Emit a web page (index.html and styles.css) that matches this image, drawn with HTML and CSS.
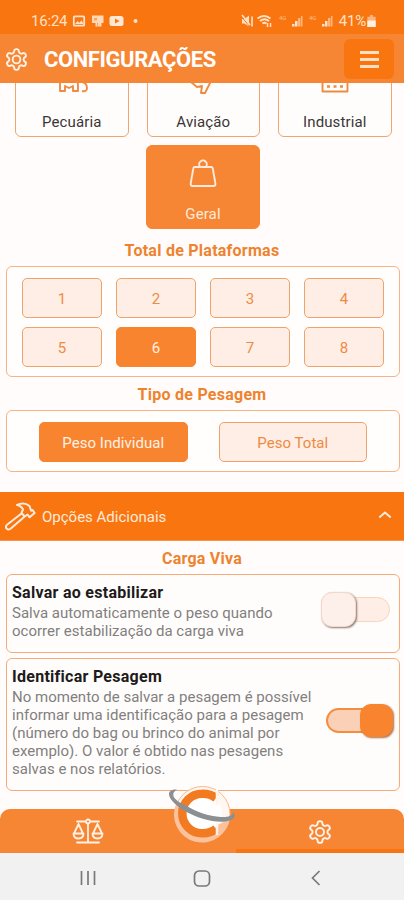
FILE: index.html
```html
<!DOCTYPE html>
<html lang="pt-BR">
<head>
<meta charset="utf-8">
<title>Configurações</title>
<link rel="stylesheet" href="styles.css">
</head>
<body>
<svg class="defs" width="0" height="0">
  <symbol id="gear" viewBox="0 0 24 24">
    <path d="M12.220 2h-.44a2 2 0 0 0-2 2v.18a2 2 0 0 1-1 1.730l-.43.25a2 2 0 0 1-2 0l-.15-.08a2 2 0 0 0-2.730.73l-.22.38a2 2 0 0 0 .73 2.730l.15.1a2 2 0 0 1 1 1.720v.51a2 2 0 0 1-1 1.740l-.15.09a2 2 0 0 0-.73 2.730l.22.38a2 2 0 0 0 2.730.73l.15-.08a2 2 0 0 1 2 0l.43.25a2 2 0 0 1 1 1.730V20a2 2 0 0 0 2 2h.44a2 2 0 0 0 2-2v-.18a2 2 0 0 1 1-1.730l.43-.25a2 2 0 0 1 2 0l.15.08a2 2 0 0 0 2.730-.73l.22-.39a2 2 0 0 0-.73-2.730l-.15-.08a2 2 0 0 1-1-1.740v-.5a2 2 0 0 1 1-1.740l.15-.09a2 2 0 0 0 .73-2.730l-.22-.38a2 2 0 0 0-2.730-.73l-.15.08a2 2 0 0 1-2 0l-.43-.25a2 2 0 0 1-1-1.730V4a2 2 0 0 0-2-2z"/>
    <circle cx="12" cy="12" r="3.700"/>
  </symbol>
</svg>
<div class="phone">
  <div class="status">
    <span class="clock">16:24</span>
    <svg class="status-left" width="68" height="14" viewBox="0 0 68 14">
      <rect x="1.8" y="2.3" width="10.4" height="9.4" rx="1" fill="none" stroke="#ffe1c7" stroke-width="1.8"/>
      <path d="M3 10l2.500-3 2 1.800 2-2.600 2 3.800z" fill="#ffe1c7"/>
      <path d="M20 1.500h11.500v7.500h-2v3.500h-6V9H20z" fill="#ffd9b8"/><path d="M22 4h3v2.500h-3z" fill="#fba45f"/><path d="M25.500 8.500V12" stroke="#fba45f"/>
      <rect x="37.500" y="2" width="14" height="10" rx="2.500" fill="#ffe8d4"/><path d="M43 4.500v5l4.500-2.500z" fill="#f97510"/>
      <circle cx="63.500" cy="7" r="2" fill="#ffe1c7"/>
    </svg>
    <svg class="status-right" width="97" height="14" viewBox="0 0 97 14" fill="#ffe1c7">
      <path d="M1 5h2.500L8 1.500v11L3.500 9.500H1z"/><path d="M0 2l9 11" stroke="#f97510"/><path d="M1 1l8 10M11 2.500v10" stroke="#ffe1c7" stroke-width="1.600"/>
      <path d="M16.500 4.500q6.500-5 13 0M19 7q4.500-3.500 9 0M21.500 9.500q2-1.500 4 0" fill="none" stroke="#ffe1c7" stroke-width="1.900"/><path d="M26.500 9v4M29.500 9v4" stroke="#ffe1c7" stroke-width="1.500"/>
      <text x="38" y="6" class="net">4G</text>
      <path d="M51 12.500V10h2.500v2.500zM54 12.500V7h2.500v5.500z"/><path d="M57 12.500V4h2.500v8.500zM60 12.500V2h1.500v10.500z" opacity=".6"/>
      <text x="68" y="6" class="net">4G</text>
      <path d="M81 12.500V10h2.500v2.500zM84 12.500V7h2.500v5.500z"/><path d="M87 12.500V4h2.500v8.500zM90 12.500V2h1.500v10.500z" opacity=".6"/>
    </svg>
    <span class="percent">41%</span>
    <svg class="battery" width="9" height="12" viewBox="0 0 9 13"><path d="M3 0h3v2H9v11H0V2h3z" fill="#fbb47d"/><path d="M0 6h9v7H0z" fill="#fff0e2"/></svg>
  </div>

  <header class="header">
    <svg class="header-gear line" width="25" height="25"><use href="#gear"/></svg>
    <h1>CONFIGURAÇÕES</h1>
    <button class="menu" aria-label="Menu"><i></i><i></i><i></i></button>
  </header>

  <main class="content">
    <div class="cards">
      <div class="card">
        <svg width="36" height="36" viewBox="0 0 36 36"><path d="M6 12q-2-6 4-7h14q5-1 7 3l2 4M6 12v15h5v-5l4 2 4-2v5h5v-6q-1-4 4-3 5 1 5 6 0 4-5 3"/></svg>
        <span>Pecuária</span>
      </div>
      <div class="card">
        <svg width="36" height="36" viewBox="0 0 36 36"><path d="M5 9l6 4 7-1L8 3l4-1 13 7 5-2q4 0 2 3l-7 9-5 10h-4l1-7-5 1-6-5 9 0z"/></svg>
        <span>Aviação</span>
      </div>
      <div class="card">
        <svg width="36" height="36" viewBox="0 0 36 36"><path d="M5.500 27.500V12l8 5v-5l8 5V4h9v23.500z"/><path d="M10 22.500h3M16.500 22.500h3M23 22.500h3" stroke-width="2.500"/></svg>
        <span>Industrial</span>
      </div>
    </div>
    <div class="card active">
      <svg width="28" height="28" viewBox="0 0 28 28"><path d="M6 8h16q1.500 0 1.800 1.500l2.600 15Q26.600 27 24.500 27h-21q-2 0-1.800-2.500l2.600-15Q4.500 8 6 8z"/><path d="M11.300 8a3.800 3.800 0 1 1 5.400 0"/></svg>
      <span>Geral</span>
    </div>

    <h2>Total de Plataformas</h2>
    <div class="panel grid">
      <button>1</button><button>2</button><button>3</button><button>4</button>
      <button>5</button><button class="on">6</button><button>7</button><button>8</button>
    </div>

    <h2 class="type-title">Tipo de Pesagem</h2>
    <div class="panel pair">
      <button class="on">Peso Individual</button><button>Peso Total</button>
    </div>

    <div class="accordion">
      <svg class="hammer" width="31" height="29" viewBox="0 0 31 29"><path d="M16.500 11.500L1.700 23q-1.500 2 0 3.700t3.800 0L19.700 14.500M12 3q7-3.500 12.500 1l1.600 4.800 1.500-.8 2 3-5 4.300-2-2.800-2.900 2-3.200-3.500 1.500-3.500Q16.500 4 12 3z"/></svg>
      <span>Opções Adicionais</span>
      <svg class="chevron" width="14" height="8" viewBox="0 0 14 8"><path d="M1.300 6.500L7 1.500l5.700 5"/></svg>
    </div>

    <h2 class="live-title">Carga Viva</h2>
    <section class="option first">
      <div class="copy">
        <h3>Salvar ao estabilizar</h3>
        <p>Salva automaticamente o peso quando<br>ocorrer estabilização da carga viva</p>
      </div>
      <div class="switch"><b></b></div>
    </section>
    <section class="option second">
      <div class="copy">
        <h3>Identificar Pesagem</h3>
        <p>No momento de salvar a pesagem é possível<br>informar uma identificação para a pesagem<br>(número do bag ou brinco do animal por<br>exemplo). O valor é obtido nas pesagens<br>salvas e nos relatórios.</p>
      </div>
      <div class="switch checked"><b></b></div>
    </section>
  </main>

  <nav class="tabs">
    <div class="tab">
      <svg class="line" width="32" height="26" viewBox="0 0 32 26"><path d="M5 3.500h8.500M18.500 3.500H27M16 6v18M5 24.500h22"/><circle cx="16" cy="3.500" r="2"/><path d="M6.500 6L2 15.500M6.500 6L11 15.500M1.500 15.500h10q0 5-5 5t-5-5zM25.500 6L21 15.500M25.500 6L30 15.500M20.500 15.500h10q0 5-5 5t-5-5z"/></svg>
    </div>
    <div class="tab selected">
      <svg class="line" width="26" height="26"><use href="#gear"/></svg>
    </div>
    <svg class="logo" width="70" height="58" viewBox="0 0 70 58">
      <circle cx="35.500" cy="29" r="27.500" fill="#fff7f1" stroke="#f8b98c"/>
      <path d="M10 17A28 28 0 1 0 63 30Q57 41 40 41 20 37 10 17z" fill="#fac39d"/>
      <circle cx="37" cy="28.500" r="18" fill="#fff"/>
      <path d="M49 13Q43 8.500 35 8.800A19.500 19.500 0 0 0 35 48.200Q43 48.500 49 44" fill="none" stroke="#f27b21" stroke-width="8.500"/>
      <path d="M50 5v15M50 38v12" stroke="#fff4eb" stroke-width="2.500"/>
      <path d="M10 4.500C-3 4 0 15 17 25.500c16 9.500 35 13.500 46 10 6-2 5.500-6 3-8.500 0 4-6 5.500-12 5-12-.5-26-5.500-36-12C6 14.500 3 9 10 4.500z" fill="#8c9092"/>
    </svg>
  </nav>

  <div class="system">
    <svg width="16" height="16" viewBox="0 0 16 16"><path d="M1.500 1v14M8 1v14M14.500 1v14"/></svg>
    <svg width="18" height="17" viewBox="0 0 18 17"><rect x="1.500" y="1" width="15" height="15" rx="4.500"/></svg>
    <svg width="12" height="16" viewBox="0 0 12 16"><path d="M9.500 1L2.500 8l7 7"/></svg>
  </div>
</div>
</body>
</html>
```

FILE: styles.css
```css
* { box-sizing: border-box; }
body { margin: 0; font-family: Roboto, "Liberation Sans", sans-serif; background: #fffcfb; }
.defs { display: block; position: absolute; }
.phone { width: 404px; height: 900px; display: flex; flex-direction: column; overflow: hidden; }
h1, h2, h3, p { margin: 0; }
svg { flex: none; }
button { font: inherit; padding: 0; }

.status { height: 34px; flex: none; background: #f97510; display: flex; align-items: center; padding: 8px 28px 0 31px; color: #ffe1c7; }
.clock { font-size: 15px; width: 41px; letter-spacing: -0.2px; }
.status-right { margin-left: auto; }
.net { font-size: 6px; opacity: .65; }
.percent { font-size: 15px; width: 28px; text-align: right; letter-spacing: -0.2px; }
.battery { margin-left: 1px; }

.line { fill: none; stroke: #fff1e5; stroke-width: 1.8; stroke-linecap: round; stroke-linejoin: round; }
.header { height: 49px; flex: none; background: #f68633; display: flex; align-items: center; padding: 2px 10px 0 4px; }
.header h1 { font-size: 22px; line-height: 28px; font-weight: 700; color: #fff; margin: 1px 0 0 15px; letter-spacing: -0.42px; }
.menu { margin-left: auto; margin-bottom: 1px; width: 50px; height: 40px; border: 0; border-radius: 6px; background: #f97510; display: flex; flex-direction: column; gap: 4px; align-items: center; justify-content: center; }
.menu i { width: 19px; height: 3px; background: #ffdfc4; }

.content { flex: none; height: 726px; overflow: hidden; display: flex; flex-direction: column; }
.cards { display: flex; gap: 18px; margin: -30px 13px 8px 15px; }
.card { width: 114px; height: 84px; flex: none; border: 1.500px solid #eda66f; border-radius: 6px; display: flex; flex-direction: column; align-items: center; justify-content: space-between; padding: 10px 0 4px; font-size: 15px; line-height: 19px; color: #3a3635; background: #fffdfc; letter-spacing: 0.1px; }
.cards .card { width: 113.500px; }
.card svg { fill: none; stroke: #ee8b42; stroke-width: 1.900; stroke-linejoin: round; }
.card.active { margin-left: 146px; background: #f68633; border-color: #f68633; color: #ffeadb; padding-top: 13px; }
.card.active svg { stroke: #ffeadb; }

h2 { font-size: 16px; line-height: 20px; font-weight: 700; color: #ee832f; text-align: center; letter-spacing: 0.25px; margin-top: 12px; }
.panel { margin: 5px 4px 0 6px; border: 1.500px solid #f3b486; border-radius: 6px; background: #fffefd; }
.panel button { height: 40px; border: 1.500px solid #efa36c; border-radius: 5px; background: #feeee6; color: #ee8b42; font-size: 15px; letter-spacing: 0.05px; padding-top: 2px; }
.panel button.on { background: #f8842f; border-color: #f8842f; color: #fff1e5; }
.grid { height: 111px; display: grid; grid-template-columns: repeat(4, 80px); column-gap: 14px; row-gap: 9px; align-content: start; padding: 11px 15px; }
.type-title { margin-top: 8px; }
.pair { height: 62px; display: flex; gap: 31px; padding: 11px 32px; }
.pair button { width: 149px; }

.accordion { height: 49px; flex: none; margin-top: 20px; background: #f97510; border-bottom: 1px solid #f79452; display: flex; align-items: center; padding: 0 12px 0 5px; color: #ffeadb; font-size: 15px; letter-spacing: 0; }
.accordion span { margin: 1px 0 0 6px; }
.accordion svg { fill: none; stroke: #ffeadb; stroke-width: 2; stroke-linejoin: round; }
.chevron { margin-left: auto; margin-bottom: 2px; }
.live-title { margin-top: 8px; }
.option { margin: 0 4px 0 6px; flex: none; border: 1.500px solid #f3ac78; border-radius: 6px; background: #fffdfc; display: flex; justify-content: space-between; padding: 8px 5px 0; }
.first { height: 79px; margin-top: 5px; }
.second { height: 133px; margin-top: 5px; }
.copy { white-space: nowrap; }
.option h3 { font-size: 16px; line-height: 20px; font-weight: 700; color: #201a1a; letter-spacing: 0.27px; }
.option p { font-size: 15px; line-height: 18px; color: #827f7e; margin-top: 1px; letter-spacing: 0.01px; }
.switch { width: 68px; height: 25px; border: 1.500px solid #fbd3bb; border-radius: 13px; background: #feeee6; margin-top: 14px; flex: none; display: flex; align-items: center; }
.switch b { width: 35px; height: 35px; flex: none; margin-left: -2px; border-radius: 11px; background: #fdf0ea; border: 1px solid #f1d8ca; box-shadow: 1px 1px 2px #8a7770; }
.first .switch { margin-right: 4px; }
.switch.checked { width: 67px; border: 2px solid #f68c3f; background: #fad1b6; justify-content: flex-end; margin: 41px 1px 0 0; }
.switch.checked b { width: 33px; height: 33px; margin-right: -2px; background: #f8842f; border-color: #f8842f; box-shadow: 1px 1px 2px #aa7048; }

.tabs { height: 44px; flex: none; position: relative; display: flex; background: #f68633; border-radius: 10px 10px 0 0; }
.tab { display: flex; align-items: center; justify-content: center; }
.tab:first-child { flex: 0 0 175px; }
.tab.selected { flex: 0 0 168px; margin-left: auto; border-bottom: 4px solid #f97510; padding-top: 5px; }
.logo { position: absolute; left: 167px; top: -24px; }

.system { flex: 1; background: #f1f1f1; display: grid; grid-template-columns: 1fr 52px 1fr; align-items: center; justify-items: center; padding-top: 3px; }
.system svg { fill: none; stroke: #77797a; stroke-width: 1.700; }
```
